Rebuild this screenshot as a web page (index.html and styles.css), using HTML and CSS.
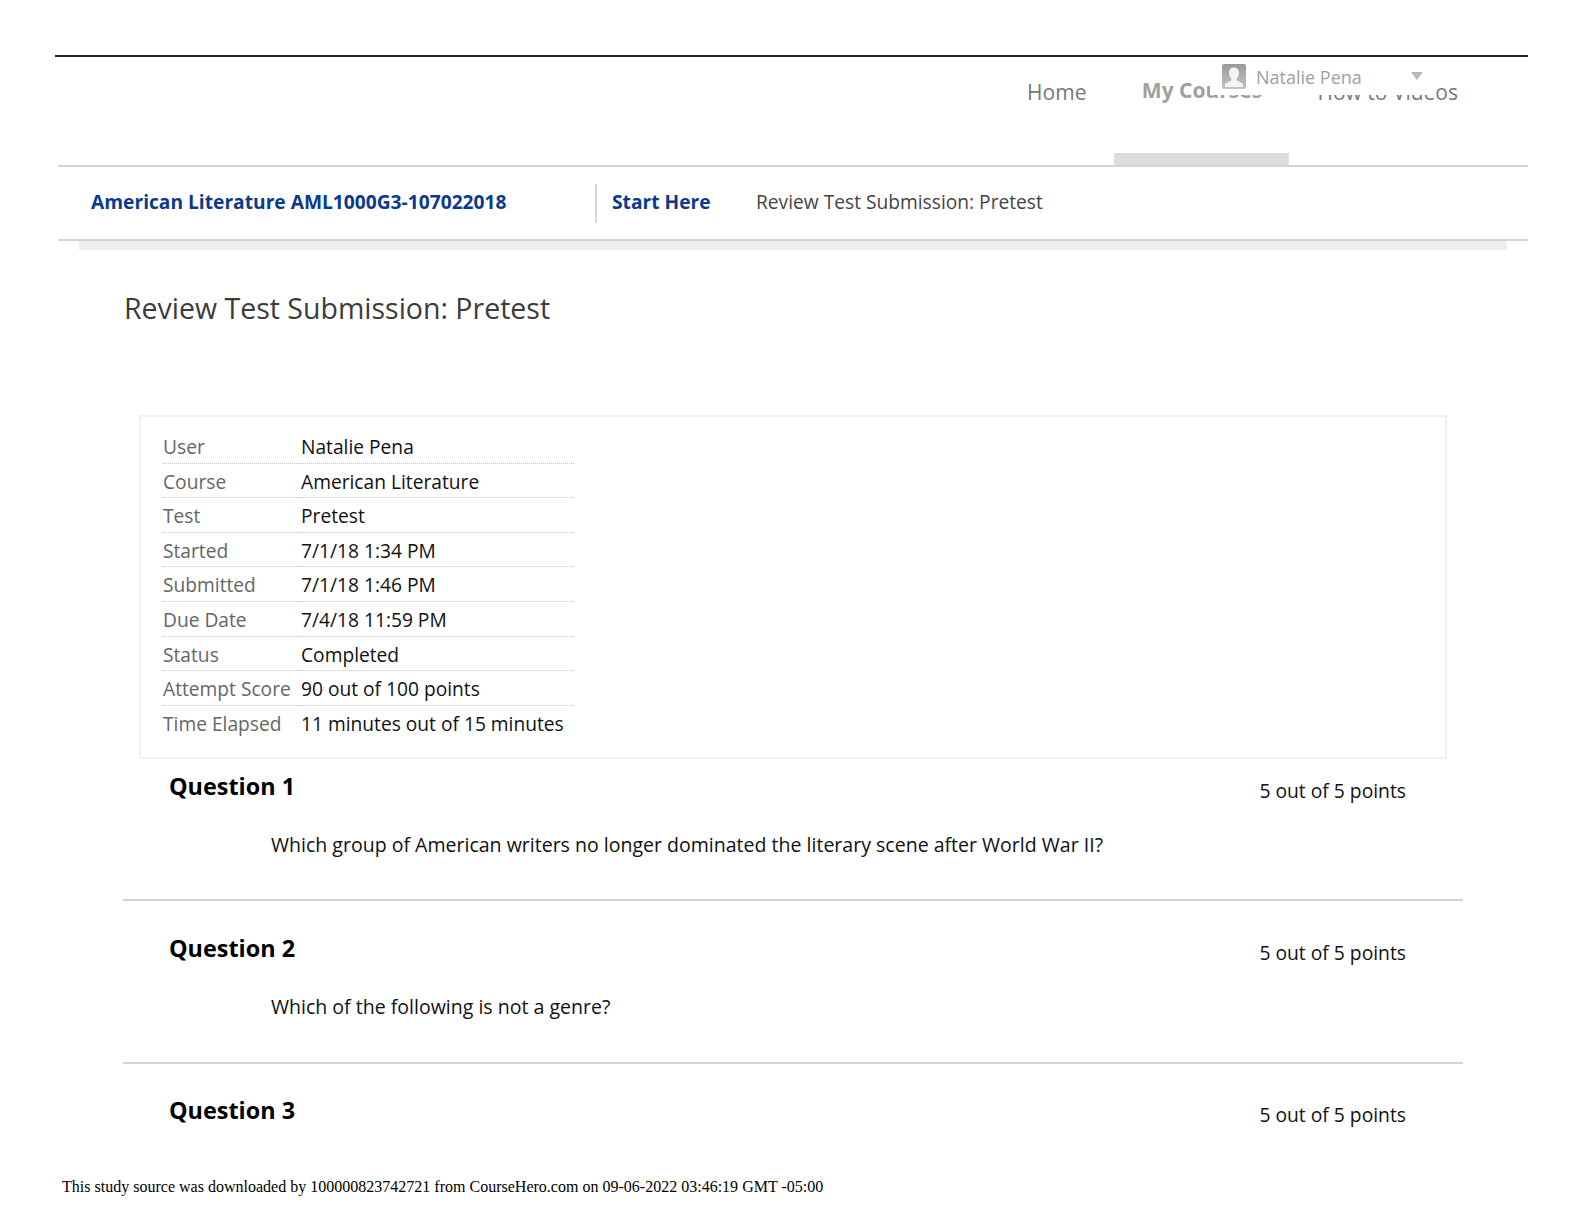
FILE: index.html
```html
<!DOCTYPE html>
<html lang="en">
<head>
<meta charset="utf-8">
<title>Review Test Submission: Pretest</title>
<link rel="stylesheet" href="styles.css">
</head>
<body>
<div class="page">
  <header class="top">
    <nav class="nav">
      <a class="nav-item home">Home</a>
      <a class="nav-item active">My Courses</a>
      <a class="nav-item videos">How to Videos</a>
    </nav>
    <div class="user-menu">
      <svg class="avatar" width="25" height="25" viewBox="0 0 25 25">
        <defs><linearGradient id="fade" x1="0" y1="0" x2="0" y2="1"><stop offset="0" stop-color="#9a9a9a"/><stop offset="1" stop-color="#c4c4c4"/></linearGradient></defs>
        <rect width="24" height="25" rx="2" fill="url(#fade)"/>
        <path d="M12 3.500c3.400 0 5 2.500 5 5.600 0 2.400-1 4.500-2.400 5.600v1.600c0 .9 4.800 2 6.400 3.700V23H3v-3c1.600-1.700 6.400-2.800 6.400-3.700v-1.600C8 13.600 7 11.500 7 9.100c0-3.100 1.600-5.600 5-5.600z" fill="#f4f4f4"/>
      </svg>
      <span class="user-name">Natalie Pena</span>
      <span class="caret"></span>
    </div>
  </header>
  <div class="crumbs">
    <a class="crumb-course">American Literature AML1000G3-107022018</a>
    <a class="crumb-start">Start Here</a>
    <span class="crumb-page">Review Test Submission: Pretest</span>
  </div>
  <div class="shade"></div>
  <h1 class="title">Review Test Submission: Pretest</h1>
  <section class="summary">
    <dl class="facts">
      <dt>User</dt><dd>Natalie Pena</dd>
      <dt>Course</dt><dd>American Literature</dd>
      <dt>Test</dt><dd>Pretest</dd>
      <dt>Started</dt><dd>7/1/18 1:34 PM</dd>
      <dt>Submitted</dt><dd>7/1/18 1:46 PM</dd>
      <dt>Due Date</dt><dd>7/4/18 11:59 PM</dd>
      <dt>Status</dt><dd>Completed</dd>
      <dt>Attempt Score</dt><dd>90 out of 100 points</dd>
      <dt class="last">Time Elapsed</dt><dd class="last">11 minutes out of 15 minutes</dd>
    </dl>
  </section>
  <section class="questions">
    <article class="question">
      <div class="q-head"><h2>Question 1</h2><span class="points">5 out of 5 points</span></div>
      <p class="q-text">Which group of American writers no longer dominated the literary scene after World War II?</p>
    </article>
    <article class="question">
      <div class="q-head"><h2>Question 2</h2><span class="points">5 out of 5 points</span></div>
      <p class="q-text">Which of the following is not a genre?</p>
    </article>
    <article class="question open">
      <div class="q-head"><h2>Question 3</h2><span class="points">5 out of 5 points</span></div>
    </article>
  </section>
  <footer class="source">This study source was downloaded by 100000823742721 from CourseHero.com on 09-06-2022 03:46:19 GMT -05:00</footer>
</div>
</body>
</html>
```
FILE: styles.css
```css
* { box-sizing: border-box; }
html, body { margin: 0; padding: 0; background: #fff; }
body { font-family: "Open Sans", "Liberation Sans", sans-serif; color: #000; }
.page { width: 1584px; height: 1224px; padding-top: 55px; overflow: hidden; position: relative; }

.top {
  position: relative;
  margin-left: 55px;
  width: 1473px;
  height: 110px;
  border-top: 2px solid #222;
}
.nav { display: flex; justify-content: flex-end; height: 108px; padding-right: 70px; }
.nav-item { font-size: 21px; line-height: 28px; padding-top: 21px; color: #777; }
.home { margin-right: 28px; }
.active {
  width: 175px;
  text-align: center;
  font-weight: 700;
  padding-top: 19px;
  color: #a0a0a0;
  border-bottom: 12px solid #ddd;
  margin-right: 28px;
}
.user-menu {
  position: absolute;
  left: 1155px;
  top: 0;
  width: 226px;
  height: 38px;
  background: #fff;
  display: flex;
  align-items: flex-start;
  padding: 7px 0 0 12px;
}
.avatar { flex: none; }
.user-name { font-size: 18px; line-height: 24px; color: #a0a0a0; margin: 1px 0 0 9px; }
.caret {
  margin: 8px 0 0 49px;
  border-left: 6px solid transparent;
  border-right: 6px solid transparent;
  border-top: 8px solid #b8b8b8;
}

.crumbs {
  margin-left: 58px;
  width: 1470px;
  height: 76px;
  border-top: 2px solid #d4d4d4;
  border-bottom: 2px solid #d4d4d4;
  display: flex;
  align-items: center;
  padding-left: 33px;
  font-size: 19.2px;
}
.crumb-course { width: 504px; font-weight: 700; color: #0a3a8f; white-space: nowrap; padding-bottom: 4px; }
.crumb-start {
  width: 161px;
  font-weight: 700;
  color: #0a3a8f;
  border-left: 2px solid #d8d8d8;
  padding: 0 0 4px 15px;
  line-height: 35px;
}
.crumb-page { color: #444; padding-bottom: 4px; }

.shade { margin-left: 79px; width: 1428px; height: 9px; background: #eee; }

.title {
  margin: 39px 0 0 124px;
  height: 126px;
  font-size: 28.5px;
  line-height: 38px;
  font-weight: 400;
  color: #3c3c3c;
}

.summary {
  margin-left: 139px;
  width: 1308px;
  height: 344px;
  border: 2px solid #f0f0f0;
  padding: 12px 0 0 22px;
}
.facts {
  margin: 0;
  width: 411px;
  display: grid;
  grid-template-columns: 138px 273px;
  grid-auto-rows: 34.600px;
  font-size: 19.2px;
  line-height: 36px;
}
.facts dt, .facts dd { margin: 0; border-bottom: 1px dotted #c4c4c4; white-space: nowrap; }
.facts dt { color: #666; }
.facts dd { color: #111; }
.facts .last { border-bottom: 0; }

.questions { margin-left: 123px; width: 1340px; }
.question { height: 162.300px; border-bottom: 2px solid #d4d4d4; padding: 30.600px 57px 0 46px; }
.question:first-child { height: 142.300px; padding-top: 11px; }
.question.open { border-bottom: 0; }
.q-head { display: flex; justify-content: space-between; align-items: flex-start; }
.q-head h2 { margin: 0; font-size: 23.400px; line-height: 32px; font-weight: 700; color: #000; }
.points { font-size: 19.300px; line-height: 27px; margin-top: 7px; color: #111; }
.q-text { margin: 27px 0 0 102px; font-size: 19.550px; line-height: 27px; color: #111; }

.source {
  position: absolute;
  left: 62px;
  top: 1176.500px;
  font-family: "Liberation Serif", "Times New Roman", serif;
  font-size: 16.020px;
  line-height: 19px;
  color: #000;
}
```
